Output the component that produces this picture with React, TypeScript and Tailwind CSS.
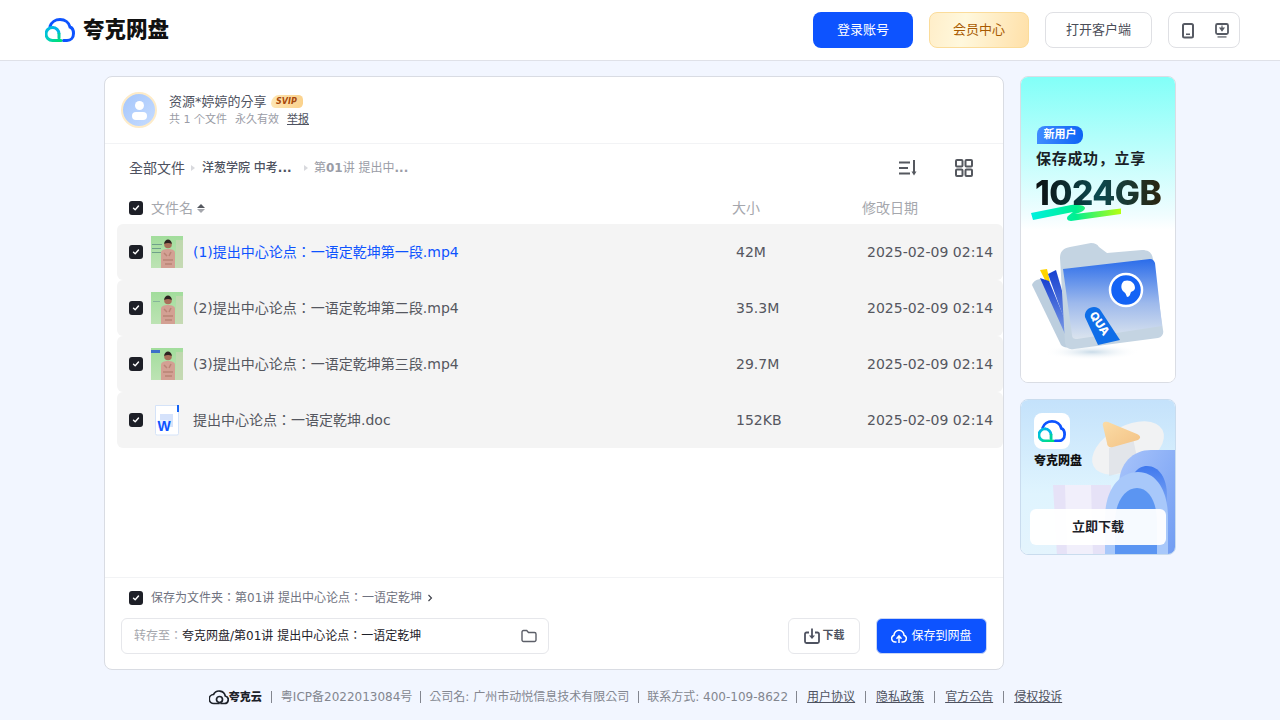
import { useId } from 'react';

const files = [
  { name: '(1)提出中心论点：一语定乾坤第一段.mp4', size: '42M', active: true, thumb: 'a' },
  { name: '(2)提出中心论点：一语定乾坤第二段.mp4', size: '35.3M', thumb: 'b' },
  { name: '(3)提出中心论点：一语定乾坤第三段.mp4', size: '29.7M', thumb: 'c' },
  { name: '提出中心论点：一语定乾坤.doc', size: '152KB', thumb: 'doc' },
];

const CloudLogo = ({ size = 30 }: { size?: number }) => {
  const id = useId();
  return (
    <svg width={size} height={size * 0.8} viewBox="0 0 30 24" fill="none">
      <defs>
        <linearGradient id={id} x1="0" y1="0" x2="1" y2="1">
          <stop offset="0" stopColor="#00b4e8" />
          <stop offset="0.5" stopColor="#00d0c0" />
          <stop offset="1" stopColor="#00e070" />
        </linearGradient>
      </defs>
      <path d="M5 8.500C6.200 4.200 10.500 1.500 15 1.500c5 0 9 3.200 10 7.500 2.300 .8 3.500 3.300 3.500 6.500 0 4-2.700 7-6.500 7h-3.500" stroke="#0d53ff" strokeWidth="3" strokeLinecap="round" />
      <path d="M7.500 9.500a6.500 6.500 0 1 0 0 13h8.500" stroke={`url(#${id})`} strokeWidth="3" strokeLinecap="round" />
      <path d="M14 16a6.500 6.500 0 0 0-6.500-6.500" stroke="#00b4e8" strokeWidth="3" />
      <path d="M14 16v4" stroke="#00d0a0" strokeWidth="3" strokeLinecap="round" />
    </svg>
  );
};

const Check = () => (
  <span className="flex h-[14px] w-[14px] shrink-0 items-center justify-center rounded-[3px] bg-[#1d1f27]">
    <svg width="8" height="8" viewBox="0 0 8 8" fill="none">
      <path d="M1.500 4.200 3.200 5.800 6.500 2" stroke="#fff" strokeWidth="1.400" strokeLinecap="round" strokeLinejoin="round" />
    </svg>
  </span>
);

const Thumb = ({ kind }: { kind: string }) => {
  const id = useId();
  if (kind === 'doc') {
    return (
      <svg width="32" height="32" viewBox="0 0 32 32" className="shrink-0">
        <path d="M4.500 1.500h23v28a1.500 1.500 0 0 1-1.500 1.500H6a1.500 1.500 0 0 1-1.500-1.500z" fill="#fff" stroke="#d5e3f8" />
        <rect x="26" y="1" width="2" height="7" fill="#1463f5" />
        <rect x="9" y="10" width="13" height="13" fill="#d5e2fb" />
        <rect x="7" y="16" width="10" height="8" fill="#eaf1ff" />
        <text x="6.500" y="27" fontFamily="Liberation Sans, sans-serif" fontSize="14" fontWeight="700" fill="#0d53ff">W</text>
      </svg>
    );
  }
  return (
    <svg width="32" height="32" viewBox="0 0 32 32" className="shrink-0">
      <defs>
        <linearGradient id={id} x1="0" y1="0" x2="0" y2="1">
          <stop offset="0" stopColor="#a2dd9c" />
          <stop offset="1" stopColor="#bde3b4" />
        </linearGradient>
      </defs>
      <rect width="32" height="32" fill={`url(#${id})`} />
      <rect x="25" y="4" width="7" height="28" fill="#c9d6b4" opacity="0.7" />
      {kind === 'a' && (
        <g fill="#6fa08a">
          <rect x="1" y="8" width="10" height="1" />
          <rect x="1" y="12" width="9" height="1" />
          <rect x="1" y="16" width="9" height="1" />
        </g>
      )}
      {kind === 'c' && <rect x="0" y="2" width="9" height="3" fill="#3d6fc8" />}
      {kind === 'b' && <rect x="2" y="9" width="7" height="1" fill="#86b59a" />}
      <path d="M10 32V17c0-3 3-4 7-4s7 1 7 4v15z" fill="#d3a093" />
      <path d="M13 17l3 3M20 16l-2 4M12 24h10M14 28h7" stroke="#b98476" strokeWidth="1.500" />
      <circle cx="17" cy="8.500" r="3.800" fill="#a9705a" />
      <path d="M13.200 8c0-3 2-4.500 3.800-4.500S20.800 5 20.800 8c-2-1.500-5.500-1.500-7.600 0z" fill="#2d2320" />
    </svg>
  );
};

const PromoFolder = () => {
  const id = useId();
  return (
    <svg width="156" height="306" viewBox="0 0 156 306" className="absolute inset-0">
      <defs>
        <linearGradient id={`${id}bg`} x1="0" y1="0" x2="0" y2="1">
          <stop offset="0" stopColor="#82fff8" />
          <stop offset="0.45" stopColor="#f0fdff" />
          <stop offset="0.5" stopColor="#ffffff" />
        </linearGradient>
        <linearGradient id={`${id}sw`} x1="0" y1="0" x2="1" y2="0">
          <stop offset="0" stopColor="#00f0e0" />
          <stop offset="0.5" stopColor="#00f090" />
          <stop offset="1" stopColor="#b8ff10" />
        </linearGradient>
        <linearGradient id={`${id}f`} x1="0" y1="0" x2="0" y2="1">
          <stop offset="0" stopColor="#2a6cea" />
          <stop offset="0.55" stopColor="#9db9ec" />
          <stop offset="1" stopColor="#dbe4ee" />
        </linearGradient>
        <linearGradient id={`${id}p`} x1="0" y1="0" x2="0" y2="1">
          <stop offset="0" stopColor="#1740d0" />
          <stop offset="1" stopColor="#8aa8e8" />
        </linearGradient>
        <radialGradient id={`${id}s`}>
          <stop offset="0" stopColor="#c9dbe8" />
          <stop offset="1" stopColor="#ffffff" stopOpacity="0" />
        </radialGradient>
      </defs>
      <rect width="156" height="306" fill={`url(#${id}bg)`} />
      <ellipse cx="71" cy="275" rx="48" ry="8" fill={`url(#${id}s)`} />
      <path d="M10 136 50 128c6-1 14 0 14 3s-6 5-10 6l46-5.500V137l-50 7c-4 0-5-3-3-5l5-4-40 8z" fill={`url(#${id}sw)`} />
      <path d="M19 193l7-1 3 13-5-2z" fill="#ffd400" />
      <path d="M11 208c1-4 6-6 9-6l32 64-4 4c-3 1-6 0-8-2z" fill="#bccede" />
      <path d="M19 201l9 3 24 58-4 4z" fill={`url(#${id}p)`} />
      <path d="M27 197l8-4 20 68-4 3z" fill={`url(#${id}p)`} />
      <path d="M39 181c0-7 4-10 10-11l21-4c4 0 6 1 8 4l8 6 35-3c7 0 10 3 11 9l10 71c1 4-1 7-5 8l-84 11c-5 1-8-1-9-6z" fill="#c4d4e2" />
      <path d="M42 192l87-10c3 0 4 2 5 4l7 63-85 13c-3 0-5-1-5-4z" fill={`url(#${id}f)`} />
      <circle cx="105" cy="213" r="16" fill="#1463f5" stroke="#fff" strokeWidth="2.500" />
      <path d="M103 204c6-2 11 2 11 7 0 2-2 3-4 4-1 2-1 5-4 5-1-2-1-4-3-5-4-3-3-9 0-11z" fill="#fff" />
      <path d="M64 240c-1-6 4-10 9-10 3 0 5 1 7 4l19 29-22 5z" fill="#0f6ee8" />
      <text x="0" y="0" transform="translate(68 238) rotate(56)" fontFamily="Inter, sans-serif" fontSize="11.500" fontWeight="800" fill="#fff">QUA</text>
    </svg>
  );
};

const PromoClient = () => {
  const id = useId();
  return (
    <svg width="156" height="156" viewBox="0 0 156 156" className="absolute inset-0">
      <defs>
        <linearGradient id={`${id}bg`} x1="0" y1="0" x2="0" y2="1">
          <stop offset="0" stopColor="#c4e2fb" />
          <stop offset="0.6" stopColor="#dff4fe" />
          <stop offset="1" stopColor="#e4f4fd" />
        </linearGradient>
        <linearGradient id={`${id}b`} x1="0" y1="0" x2="1" y2="1">
          <stop offset="0" stopColor="#a8c4fb" />
          <stop offset="1" stopColor="#6f9bf2" />
        </linearGradient>
        <linearGradient id={`${id}h`} x1="0" y1="0" x2="0" y2="1">
          <stop offset="0" stopColor="#3f78ee" />
          <stop offset="1" stopColor="#8fb3f6" />
        </linearGradient>
        <linearGradient id={`${id}t`} x1="0" y1="0" x2="1" y2="1">
          <stop offset="0" stopColor="#fbdca6" />
          <stop offset="1" stopColor="#f3c285" />
        </linearGradient>
      </defs>
      <rect width="156" height="156" fill={`url(#${id}bg)`} />
      <path d="M32 85h58v71H36z" fill="#e6e2f7" />
      <path d="M44 85h26l2 71H46z" fill="#f1effb" />
      <ellipse cx="107" cy="48" rx="39" ry="22" transform="rotate(-28 107 48)" fill="#f1f2f3" />
      <path d="M88 48l24-10 6 30-30 8z" fill="#d6dae2" opacity="0.55" />
      <path d="M82 26c-1-4 2-5 5-4l29 12c4 2 4 4 1 6l-25 7c-4 1-6-1-6-4z" fill={`url(#${id}t)`} />
      <path d="M98 156V85c0-22 14-35 32-35h26v106z" fill={`url(#${id}b)`} />
      <path d="M108 92c0-16 8-26 18-26 12 0 20 12 20 30v20h-38z" fill={`url(#${id}h)`} />
      <path d="M84 156V118c0-28 14-46 33-46 18 0 30 18 30 46v38z" fill="#a8c8fa" />
      <path d="M94 156V122c0-20 10-34 22-34 12 0 20 14 20 34v34z" fill="#5b95f2" />
    </svg>
  );
};

export default function App() {
  return (
    <div className="h-[720px] overflow-hidden bg-[#f2f6ff] font-['DejaVu_Sans','Noto_Sans_CJK_KR',sans-serif]">
      <header className="flex h-[61px] items-center justify-between border-b border-[#dfe1e8] bg-white pl-[45px] pr-10">
        <div className="flex items-center gap-2">
          <CloudLogo size={30} />
          <span className="text-[21.500px] leading-none font-black text-[#111]">夸克网盘</span>
        </div>
        <div className="flex items-center gap-4 text-[13px]">
          <button className="flex h-9 w-[100px] items-center justify-center rounded-lg bg-[#0d53ff] text-white">登录账号</button>
          <button className="flex h-9 w-[100px] items-center justify-center rounded-lg border border-[#fbdc9a] bg-[linear-gradient(100deg,#ffeec9,#fff8dd_35%,#ffe0a8)] text-[#a85a00]">会员中心</button>
          <button className="flex h-9 w-[107px] items-center justify-center rounded-lg border border-[#dfe0e4] text-[#4a4d57]">打开客户端</button>
          <div className="flex h-9 w-[72px] items-center justify-between rounded-lg border border-[#dfe0e4] pl-3 pr-[9px]">
            <svg width="14" height="17" viewBox="0 0 14 17" fill="none">
              <rect x="2" y="2" width="10" height="13.500" rx="1.500" stroke="#565a63" strokeWidth="2" />
              <rect x="5" y="11.500" width="4" height="1.500" fill="#565a63" />
            </svg>
            <svg width="16" height="17" viewBox="0 0 16 17" fill="none">
              <rect x="2" y="2" width="12" height="10" rx="1.500" stroke="#565a63" strokeWidth="1.800" />
              <path d="M8 3.500v3.500M6 6h4L8 8.800z" stroke="#565a63" strokeWidth="1.100" fill="#565a63" />
              <rect x="3.500" y="14" width="9" height="1.800" fill="#8d9096" />
            </svg>
          </div>
        </div>
      </header>

      <main className="flex justify-center gap-4 pt-[15px]">
        <section className="flex h-[594px] w-[900px] flex-col rounded-lg border border-[#d9dce3] bg-white">
          <div className="flex h-[67px] shrink-0 items-center gap-3 border-b border-[#f2f3f5] pl-4">
            <div className="flex h-9 w-9 flex-col items-center justify-center gap-[2px] rounded-full border-2 border-[#fdebc8] bg-[linear-gradient(135deg,#a5c6fb,#c6dcff)]">
              <span className="h-[9px] w-[9px] rounded-full bg-white" />
              <span className="h-2 w-[15px] rounded-full bg-white" />
            </div>
            <div>
              <div className="flex items-center gap-1 text-[13px] leading-[18px] text-[#4e5260]">
                资源*婷婷的分享
                <span className="flex h-[13px] w-8 items-center justify-center rounded-[5px] rounded-tl-[9px] bg-[linear-gradient(90deg,#fde6b4,#fbd28c)] text-[8px] leading-none font-black italic text-[#a8480c]">SVIP</span>
              </div>
              <div className="mt-[1px] flex items-center text-[11px] leading-[16px] text-[#9a9ca6]">
                <span>共 1 个文件</span>
                <span className="ml-2">永久有效</span>
                <span className="ml-2 text-[#4e5260] underline">举报</span>
              </div>
            </div>
          </div>

          <div className="flex h-[48px] shrink-0 items-center justify-between pl-6 pr-[29px]">
            <div className="flex items-center">
              <span className="text-[14px] text-[#4e5260]">全部文件</span>
              <span className="ml-[6px] mr-[7px] border-y-[3px] border-l-[4px] border-y-transparent border-l-[#d8d9dd]" />
              <span className="w-[90px] text-[12px] font-medium text-[#4e5260]">洋葱学院 中考<b>...</b></span>
              <span className="ml-[12px] mr-[6px] border-y-[3px] border-l-[4px] border-y-transparent border-l-[#d8d9dd]" />
              <span className="text-[12px] text-[#9a9ca6]">第<b>01</b>讲 提出中<b>...</b></span>
            </div>
            <div className="flex items-center gap-9">
              <svg width="20" height="20" viewBox="0 0 20 20" fill="none">
                <path d="M1 4.500h11M1 10h9M1 15.500h11" stroke="#55585f" strokeWidth="2" />
                <path d="M16 2v14" stroke="#55585f" strokeWidth="2" />
                <path d="M13.500 13.500h5L16 17.500z" fill="#55585f" />
              </svg>
              <svg width="20" height="20" viewBox="0 0 20 20" fill="none" stroke="#55585f" strokeWidth="2">
                <rect x="2" y="2" width="6.500" height="6.500" rx="1" />
                <rect x="11.500" y="2" width="6.500" height="6.500" rx="1" />
                <rect x="2" y="11.500" width="6.500" height="6.500" rx="1" />
                <rect x="11.500" y="11.500" width="6.500" height="6.500" rx="1" />
              </svg>
            </div>
          </div>

          <div className="flex h-8 shrink-0 items-center pl-6 text-[14px] text-[#a5a7ad]">
            <Check />
            <span className="ml-2 flex items-center gap-1 leading-none">
              文件名
              <span className="flex flex-col gap-[1px]">
                <span className="border-x-[4px] border-b-[4px] border-x-transparent border-b-[#55585f]" />
                <span className="border-x-[4px] border-t-[4px] border-x-transparent border-t-[#a5a7ad]" />
              </span>
            </span>
            <span className="ml-auto w-[130px]">大小</span>
            <span className="w-[141px]">修改日期</span>
          </div>

          <div className="flex-1">
            {files.map((f) => (
              <div key={f.name} className="ml-3 flex h-14 items-center rounded-md bg-[#f4f4f4] pl-3 text-[14px] text-[#55575f]">
                <Check />
                <span className="ml-2"><Thumb kind={f.thumb} /></span>
                <span className={`ml-[10px] ${f.active ? 'text-[#0d53ff]' : ''}`}>{f.name}</span>
                <span className="ml-auto w-[131px]">{f.size}</span>
                <span className="w-[136px] whitespace-nowrap">2025-02-09 02:14</span>
              </div>
            ))}
          </div>

          <div className="h-[92px] shrink-0 border-t border-[#f2f3f5]">
            <div className="flex h-10 items-center pl-6 text-[12px] text-[#6f7280]">
              <Check />
              <span className="ml-2">保存为文件夹：第01讲 提出中心论点：一语定乾坤</span>
              <svg width="6" height="8" viewBox="0 0 6 8" fill="none" className="ml-[5px]">
                <path d="M1.500 1 4.500 4l-3 3" stroke="#3a3d46" strokeWidth="1.100" />
              </svg>
            </div>
            <div className="flex items-center justify-between pl-4 pr-4">
              <div className="flex h-9 w-[428px] items-center justify-between rounded-md border border-[#e6e7eb] pl-3 pr-[11px] text-[12px]">
                <span className="text-[#1d2129]"><span className="text-[#a5a7ad]">转存至：</span>夸克网盘/第01讲 提出中心论点：一语定乾坤</span>
                <svg width="16" height="14" viewBox="0 0 16 14" fill="none">
                  <path d="M1 3a1.500 1.500 0 0 1 1.500-1.500h3.200L7.500 3.500h6A1.500 1.500 0 0 1 15 5v6a1.500 1.500 0 0 1-1.500 1.500h-11A1.500 1.500 0 0 1 1 11z" stroke="#5c5f68" strokeWidth="1.400" />
                </svg>
              </div>
              <div className="flex items-center gap-4">
                <button className="flex h-9 w-[72px] items-center justify-center gap-[3px] rounded-md border border-[#e6e7eb] text-[11px] font-bold text-[#4e5260]">
                  <svg width="16" height="16" viewBox="0 0 16 16" fill="none">
                    <path d="M5 4.500H2.500A1.500 1.500 0 0 0 1 6v7.500A1.500 1.500 0 0 0 2.500 15h11a1.500 1.500 0 0 0 1.500-1.500V6a1.500 1.500 0 0 0-1.500-1.500H11" stroke="#4e5260" strokeWidth="1.800" />
                    <path d="M8 .5v8" stroke="#4e5260" strokeWidth="1.800" />
                    <path d="M5 7.500h6l-3 3.500z" fill="#4e5260" />
                  </svg>
                  下载
                </button>
                <button className="flex h-9 w-[111px] items-center justify-center gap-1 rounded-md border border-[#c9d6f5] bg-[#0d53ff] text-[12px] text-white">
                  <svg width="16" height="16" viewBox="0 0 16 16" fill="none">
                    <path d="M5 14H4.200A3.500 3.500 0 0 1 3 7.200 5 5 0 0 1 13 7.200 3.500 3.500 0 0 1 11.800 14H11" stroke="#fff" strokeWidth="1.500" strokeLinecap="round" />
                    <path d="M8 15V8.500M5.500 10.800 8 8l2.500 2.800" stroke="#fff" strokeWidth="1.500" />
                  </svg>
                  保存到网盘
                </button>
              </div>
            </div>
          </div>
        </section>

        <aside className="flex w-[156px] flex-col gap-4">
          <div className="relative h-[307px] overflow-hidden rounded-lg border border-[#dadde4] bg-white">
            <PromoFolder />
            <span className="absolute left-4 top-[49px] flex h-[18px] w-[46px] items-center justify-center rounded-[8px] rounded-bl-none bg-[linear-gradient(90deg,#3f8cff,#0d63f5)] text-[11px] font-bold text-white">新用户</span>
            <span className="absolute left-[15px] top-[71px] whitespace-nowrap font-['Noto_Sans_CJK_SC',sans-serif] text-[15px] leading-5 font-bold tracking-[0.7px] text-[#1a2126]">保存成功，立享</span>
            <span className="absolute left-[14px] top-[96px] whitespace-nowrap bg-[linear-gradient(90deg,#0c0f10,#0b4a4f_50%,#2a2410)] bg-clip-text font-['Inter',sans-serif] text-[33.500px] leading-10 font-extrabold tracking-[-0.5px] text-transparent">1024GB</span>
          </div>
          <div className="relative h-[156px] overflow-hidden rounded-lg border border-[#c9dcee] bg-white">
            <PromoClient />
            <span className="absolute left-[13px] top-[13px] flex h-9 w-9 items-center justify-center rounded-lg bg-white">
              <CloudLogo size={28} />
            </span>
            <span className="absolute left-[13px] top-[51px] text-[12px] leading-5 font-black text-[#111]">夸克网盘</span>
            <span className="absolute bottom-[9px] left-[9px] flex h-9 w-[136px] items-center justify-center rounded-md bg-white/95 text-[13px] font-bold text-[#1d2129]">立即下载</span>
          </div>
        </aside>
      </main>

      <footer className="mt-[19px] flex items-center justify-center pr-[9px] text-[12px] leading-none text-[#83868f]">
        <svg width="20" height="16" viewBox="0 0 20 16" fill="none">
          <path d="M12 14.500h3.500a3.800 3.800 0 0 0 .8-7.500A6.300 6.300 0 0 0 4.500 5.500 4.500 4.500 0 0 0 5 14.500h5" stroke="#1d2129" strokeWidth="1.700" strokeLinecap="round" />
          <circle cx="10.500" cy="10.500" r="3" stroke="#1d2129" strokeWidth="1.700" />
        </svg>
        <span className="text-[11px] font-black text-[#1d2129]">夸克云</span>
        <span className="ml-[9px] mr-[9px] h-3 w-px bg-[#83868f]" />
        <span>粤ICP备2022013084号</span>
        <span className="ml-2 mr-[8px] h-3 w-px bg-[#83868f]" />
        <span>公司名: 广州市动悦信息技术有限公司</span>
        <span className="ml-[9px] mr-2 h-3 w-px bg-[#83868f]" />
        <span>联系方式: 400-109-8622</span>
        <span className="mx-2 h-3 w-px bg-[#83868f]" />
        <span className="ml-[2px] text-[#4e5260] underline">用户协议</span>
        <span className="mx-[10px] h-3 w-px bg-[#83868f]" />
        <span className="text-[#4e5260] underline">隐私政策</span>
        <span className="mx-[10px] h-3 w-px bg-[#83868f]" />
        <span className="text-[#4e5260] underline">官方公告</span>
        <span className="mx-[10px] h-3 w-px bg-[#83868f]" />
        <span className="text-[#4e5260] underline">侵权投诉</span>
      </footer>
    </div>
  );
}
